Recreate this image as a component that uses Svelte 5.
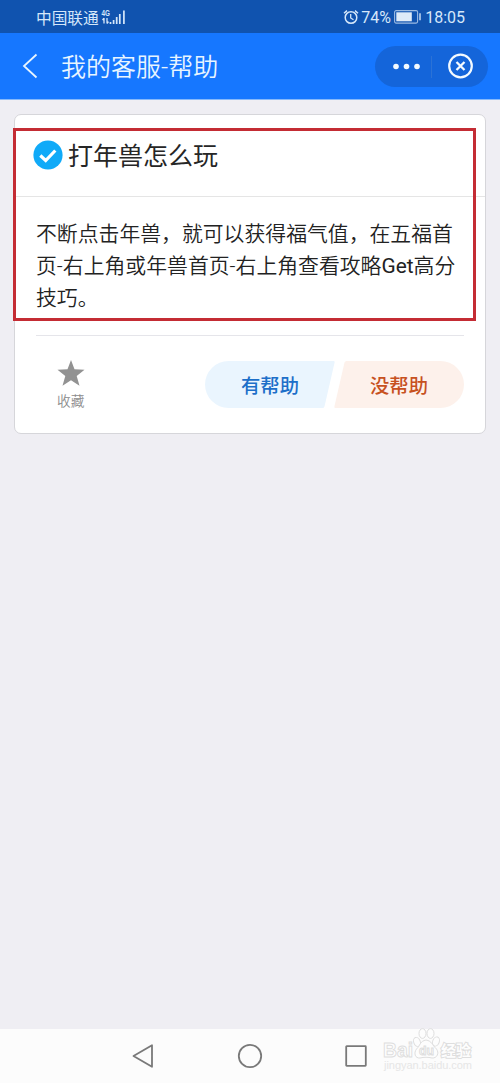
<script>
  const lines = [
    '不断点击年兽，就可以获得福气值，在五福首',
    '页-右上角或年兽首页-右上角查看攻略Get高分',
    '技巧。'
  ];
  const parts = (line) => line.split(/([A-Za-z]+)/);
</script>

<div class="screen">
  <div class="status">
    <span class="carrier">中国联通</span>
    <svg class="signal" width="26" height="18" viewBox="0 0 26 18">
      <text x="0.500" y="8" class="net" textLength="8.500" lengthAdjust="spacingAndGlyphs">4G</text>
      <path d="M3 10v5.500M1.500 12l1.500-1.700M6 10v5.500M7.500 13.700L6 15.500" stroke="#d5e7fa" stroke-width="1.300" fill="none" />
      <path d="M9.500 14v2M12.600 12v4M15.700 9v7M18.800 6v10M22.900 2.500v13.500" stroke="#d5e7fa" stroke-width="1.700" fill="none" />
    </svg>
    <span class="grow"></span>
    <svg class="alarm" width="16" height="16" viewBox="0 0 16 16" fill="none" stroke="#d5e7fa">
      <circle cx="8" cy="8.500" r="5.800" stroke-width="1.500" />
      <path d="M7.700 5v4l2.800 1.800" stroke-width="1.300" />
      <path d="M1 4.200L4 1.600M15 4.200L12 1.600" stroke-width="1.500" />
    </svg>
    <span class="pct">74%</span>
    <svg class="battery" width="28" height="14" viewBox="0 0 28 14">
      <rect x="0.600" y="0.600" width="23" height="12.500" rx="1.500" fill="none" stroke="#9bbbe3" stroke-width="1.100" />
      <rect x="2.300" y="2.300" width="15.500" height="9" fill="#dfebf8" />
      <path d="M26 3.300v7" stroke="#c5daf1" stroke-width="1.500" />
    </svg>
    <span class="clock">18:05</span>
  </div>

  <header>
    <svg class="back" width="18" height="26" viewBox="0 0 18 26">
      <path d="M15.500 1.500L3 13L15.500 24.500" fill="none" stroke="#e8f5ff" stroke-width="1.800" />
    </svg>
    <h1>我的客服-帮助</h1>
    <div class="capsule">
      <svg width="113" height="42" viewBox="0 0 113 42">
        <g fill="#f3faff">
          <circle cx="21" cy="20.500" r="2.800" /><circle cx="31.500" cy="20.500" r="2.800" /><circle cx="42" cy="20.500" r="2.800" />
        </g>
        <path d="M56.500 10v22" stroke="#2b72d6" />
        <g fill="none" stroke="#f3faff">
          <circle cx="85.500" cy="20" r="11.300" stroke-width="2.200" />
          <path d="M81.500 16l8 8M89.500 16l-8 8" stroke-width="2.300" />
        </g>
      </svg>
    </div>
  </header>

  <main>
    <section class="card">
      <div class="title">
        <svg width="30" height="30" viewBox="0 0 30 30">
          <circle cx="15" cy="15" r="14.600" fill="#10aaf8" />
          <path d="M7.300 15.500L12.700 20.500L22.300 10.500" fill="none" stroke="#fff" stroke-width="3.200" />
        </svg>
        <h2>打年兽怎么玩</h2>
      </div>
      <div class="answer">
        {#each lines as line}
          <div>{#each parts(line) as part, i}{#if i % 2}<span class="latin">{part}</span>{:else}{part}{/if}{/each}</div>
        {/each}
      </div>
      <div class="actions">
        <div class="fav">
          <svg width="28" height="27" viewBox="0 0 28 27">
            <path d="M14 0L17.500 9.300L27.500 9.800L19.700 16L22.500 25.700L14 20.300L5.500 25.700L8.300 16L0.500 9.800L10.500 9.300Z" fill="#929292" />
          </svg>
          <span>收藏</span>
        </div>
        <div class="vote yes">
          <svg width="130" height="47" viewBox="0 0 130 47"><path d="M23.500 0H128.500Q130 0 129.600 1.500L119.500 45.500Q119 47 117.500 47H23.500A23.500 23.500 0 0 1 23.500 0Z" fill="#eaf5fe" /></svg>
          <span>有帮助</span>
        </div>
        <div class="vote no">
          <svg width="130" height="47" viewBox="0 0 130 47"><path d="M106.500 0H12.500Q11 0 10.500 1.500L0.400 45.500Q0 47 1.500 47H106.500A23.500 23.500 0 0 0 106.500 0Z" fill="#fdf1eb" /></svg>
          <span>没帮助</span>
        </div>
      </div>
      <div class="highlight"></div>
    </section>
  </main>

  <nav>
    <svg width="22" height="26" viewBox="0 0 22 26"><path d="M20 2.200V23.800L1.500 13Z" /></svg>
    <svg width="26" height="26" viewBox="0 0 26 26"><circle cx="13" cy="13" r="11.200" /></svg>
    <svg width="22" height="22" viewBox="0 0 22 22"><rect x="1.200" y="1.200" width="19.600" height="19.600" rx="0.500" /></svg>
    <div class="watermark">
      <svg width="96" height="50" viewBox="0 0 96 50">
        <g fill="#fdfdfd" stroke="#dedede" stroke-width="1">
          <text x="1" y="33" class="bai" textLength="30" lengthAdjust="spacingAndGlyphs">Bai</text>
          <ellipse cx="35" cy="18" rx="3.300" ry="4.700" transform="rotate(-20 35 18)" />
          <ellipse cx="40.500" cy="9.500" rx="3.500" ry="4.900" />
          <ellipse cx="48.500" cy="9.500" rx="3.500" ry="4.900" />
          <ellipse cx="54" cy="17.500" rx="3.300" ry="4.700" transform="rotate(20 54 17.500)" />
          <path d="M44 16C38 17 38 22 34.500 25C31.500 29 33 34.500 38 34C42 33 46 33 50 34C55 34.500 57.500 29 54.500 25C50 21 50 17 44 16Z" />
          <text x="37" y="31" class="du" textLength="15" lengthAdjust="spacingAndGlyphs">du</text>
          <text x="59" y="32" class="exp" textLength="30">经验</text>
        </g>
        <text x="2" y="45" class="site" textLength="88">jingyan.baidu.com</text>
      </svg>
    </div>
  </nav>
</div>

<style>
  :global(body) { margin: 0; }
  .screen {
    width: 500px; height: 1083px; display: flex; flex-direction: column;
    background: #efeef3; overflow: hidden;
    font-family: Roboto, "Noto Sans CJK SC", sans-serif;
  }
  .status {
    height: 33px; box-sizing: border-box; background: #1053af; color: #d5e7fa;
    display: flex; align-items: center; padding: 0 35px 0 36px; font-size: 16px; line-height: 33px;
  }
  .carrier { font-size: 15.700px; padding-top: 3px; }
  .signal { margin-left: 2px; }
  .net { font: bold 9px "Liberation Sans", sans-serif; fill: #d5e7fa; }
  .grow { flex: 1; }
  .alarm { margin-right: 2px; }
  .pct, .clock { padding-top: 1px; }
  .pct { width: 33px; }
  .battery { width: 28px; }
  .clock { margin-left: 3px; }
  header {
    height: 67px; box-sizing: border-box; background: #1677ff; border-bottom: 1px solid #86b9fb;
    display: flex; align-items: center; padding: 0 12px 0 21px;
  }
  h1 { flex: 1; margin: 0 0 0 22px; padding-top: 4px; font-weight: 350; font-size: 25px; line-height: 36px; color: #e8f5ff; white-space: nowrap; }
  .capsule { width: 113px; height: 41px; border-radius: 21px; background: #1465da; }
  .capsule svg { display: block; }
  main { flex: 1; padding: 14px; }
  .card {
    position: relative; height: 320px; box-sizing: border-box; background: #fff;
    border: 1px solid #d6d6da; border-radius: 7px; display: flex; flex-direction: column;
  }
  .title {
    height: 82px; box-sizing: border-box; border-bottom: 1px solid #e5e5e5;
    display: flex; align-items: center; padding: 0 18px 2px; gap: 5px;
  }
  h2 { margin: 0; padding-top: 4px; font-size: 25px; font-weight: 400; color: #262626; line-height: 36px; }
  .answer {
    height: 139px; box-sizing: border-box; margin: 0 21px; padding-top: 21px;
    border-bottom: 1px solid #e5e5ea; font-size: 20.850px; line-height: 32px;
    font-weight: 350; color: #222; white-space: nowrap;
  }
  .latin { font-weight: 400; }
  .actions { display: flex; padding: 25px 21px 0 42px; }
  .fav {
    width: 28px; margin-right: 120px; display: flex; flex-direction: column;
    font-size: 13.700px; font-weight: 350; line-height: 18px; color: #8c8c8c; white-space: nowrap;
  }
  .fav svg { margin-top: -1px; }
  .fav span { margin-top: 5px; }
  .vote { display: grid; width: 130px; height: 47px; }
  .vote > * { grid-area: 1 / 1; }
  .vote span { place-self: center; font-size: 19.300px; font-weight: 500; }
  .yes { color: #1d6fc9; }
  .no { margin-left: -1px; color: #c7511f; }
  .highlight {
    position: absolute; left: -2px; top: 13px; width: 463px; height: 193px;
    box-sizing: border-box; border: 3px solid #c42c34;
  }
  nav {
    position: relative; height: 54px; background: #fcfcfc; display: flex;
    align-items: center; padding-left: 132px;
  }
  nav > svg { fill: none; stroke: #797979; stroke-width: 1.800; stroke-linejoin: round; }
  nav > svg + svg { margin-left: 83px; }
  nav > svg:nth-of-type(3) { margin-left: 82px; }
  .watermark { position: absolute; left: 382px; top: -5px; }
  .bai { font: bold 21px "Liberation Sans", sans-serif; }
  .du { font: bold 13px "Liberation Sans", sans-serif; }
  .exp { font: bold 15px "Noto Sans CJK SC", sans-serif; paint-order: stroke; stroke-width: 2px; }
  .site { font: 11px "Liberation Sans", sans-serif; fill: #e6e6e6; }
</style>
